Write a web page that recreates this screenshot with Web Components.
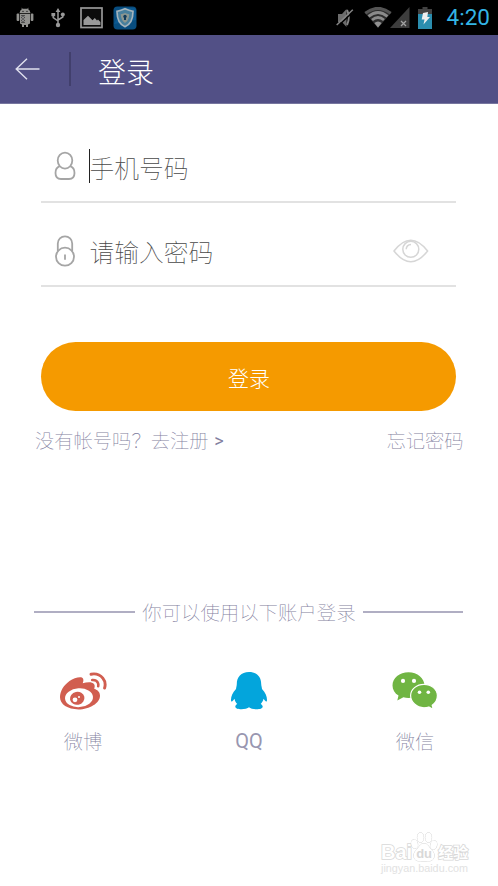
<!DOCTYPE html>
<html lang="zh-CN">
<head>
<meta charset="utf-8">
<title>登录</title>
<style>
body {
    margin: 0;
    background: #fff;
    font-family: Roboto, "Noto Sans CJK SC", sans-serif;
    font-weight: 100;
    overflow: hidden;
}
</style>
</head>
<body>
<login-page></login-page>

<script>
const icons = {
    android: [20, 22, `<g fill="#92928f"><path d="M4.5 6.2Q5 2.8 7 2L6 .5 7.8 1.7h4.4L14 .5 13 2q2 .8 2.5 4.2z"/><path d="M5 7h10v9.5l-2 1V20h-2v-2H9v2H7v-2.5l-2-1z"/><rect x="1.6" y="6.5" width="2.7" height="7.5" rx="1"/><rect x="15.7" y="6.5" width="2.7" height="7.5" rx="1"/></g><path d="M6 8h4v8H6z" fill="#333" opacity=".75"/><path d="M6 9l4 3-4 3M10 9l-4 3 4 3" stroke="#aaa" stroke-width=".7" fill="none"/><circle cx="8" cy="4.3" r=".6"/><circle cx="12" cy="4.3" r=".6"/>`],
    usb: [14, 20, `<g fill="none" stroke="#999" stroke-width="1.5"><path d="M7 3v14M2.2 6v3.6L7 13M11.8 6v3L7 12"/></g><g fill="#999"><path d="M7 0l2.4 4H4.6zM.4 5h3.8v3.2H.4z"/><circle cx="11.8" cy="6.4" r="2"/><circle cx="7" cy="17" r="2.2"/></g>`],
    picture: [24, 22, `<rect x="1" y="1" width="21" height="19.5" fill="#0b0b0b" stroke="#989898" stroke-width="1.7"/><path d="M3.5 18v-5L8 8.8l4.5 4.5 2.3-2.3 2.2 2.5 1-1 2.4 2.5v3z" fill="#999"/>`],
    shield: [24, 24, `<rect x=".5" y=".5" width="23" height="23" rx="4" fill="#084d7f"/><path d="M1 18l8-16h11q3 0 3 3v9z" fill="#1065a0" opacity=".55"/><path d="M12 2.8Q16 4.7 20 5.3 20 17.5 12 20.7 4 17.5 4 5.3 8 4.7 12 2.8z" fill="#477f9d" stroke="#a5b4bc" stroke-width="1.7"/><path d="M12 7q2 1 4.3 1.3Q16 14.5 12 17 8 14.5 7.7 8.3 10 8 12 7z" fill="#8b9690"/><circle cx="12" cy="10.4" r="1.7" fill="#123c5c"/><path d="M11 11h2v3h-2z" fill="#123c5c"/>`],
    mute: [18, 22, `<path d="M2 7h4l4.5-5v18L6 15H2z" fill="#6c6c6c"/><path d="M11 3q3.6 7.5 0 15" fill="none" stroke="#858585" stroke-width="2"/><path d="M2 19L18 4" stroke="#000" stroke-width="1.5"/><path d="M.7 18L16.8 2.8" stroke="#858585" stroke-width="1.5"/>`],
    wifi: [28, 22, `<path d="M.7 5.6Q14-4 27.3 5.6L14 21z" fill="#2d2d2d"/><path d="M1.3 6.2Q14-3.5 26.7 6.2" fill="none" stroke="#555" stroke-width="3"/><g fill="none" stroke="#8b8b8b" stroke-width="2.8"><path d="M4.5 9.4Q14 1.5 23.5 9.4M8 13Q14 8 20 13"/></g><path d="M10.3 16q3.7-3 7.4 0L14 20.5z" fill="#929292"/>`],
    signal: [20, 21, `<path d="M19.5 0v21H0z" fill="#3d3d3d"/><path d="M11 14l5 5M16 14l-5 5" stroke="#a3a3a3" stroke-width="1.3"/>`],
    battery: [14, 22, `<path d="M4.5 0h5v2H14v6H0V2h4.5z" fill="#424242"/><path d="M0 7h14v15H0z" fill="#2b8dae"/><path d="M5 6l5-1-.7 5H12L5.5 17.5l1-5H3.7z" fill="#eee"/>`],
    back: [26, 24, `<path d="M12 1.8L1.2 12 12 22.2M1.5 12h23" fill="none" stroke="#e0e0ee" stroke-width="1.4"/>`],
    user: [22, 30, `<g fill="none" stroke="#a5a5a5" stroke-width="1.8"><ellipse cx="11" cy="9.6" rx="7.3" ry="8"/><path d="M5.7 15.2Q1.5 16.8 1.5 22q0 6 5.5 6h8q5.5 0 5.5-6 0-5.2-4.2-6.8"/></g>`],
    lock: [22, 32, `<g fill="none" stroke="#a5a5a5" stroke-width="1.8"><path d="M3.8 16V8.5a7.2 7.2 0 0 1 14.4 0V16"/><circle cx="11" cy="21.7" r="9"/><path d="M11 19.5v5.2"/></g>`],
    eye: [36, 24, `<g fill="none" stroke="#d6d6d6" stroke-width="1.5"><path d="M1 12Q17.8-9.5 34.6 12 17.8 33.5 1 12z"/><circle cx="17.8" cy="10.3" r="8"/><path d="M13.2 10.3q.2-4.5 4.8-4.8"/></g>`],
    weibo: [48, 38, `<path d="M10.5 9C15 6 22.5 3.7 24 6.5c.8 1.6.2 3.4-.3 4.8C28 10 33 9.5 35 12c1.2 1.7.6 3.5.2 4.7 3.7 1.4 5.8 3.3 5.8 7 0 7.4-10.4 13.7-21.5 13.7C8.5 37.4 1 32.3 1 25.3 1 19 4.8 13.2 10.5 9z" fill="#d15e50"/><ellipse cx="20" cy="25.7" rx="14" ry="9.4" transform="rotate(-4 20 25.7)" fill="#fff"/><ellipse cx="18.2" cy="26.3" rx="7.3" ry="6.5" transform="rotate(-12 18.2 26.3)" fill="#d15e50"/><circle cx="16" cy="27.8" r="2.4" fill="#fff"/><circle cx="20" cy="25.1" r="1" fill="#fff"/><g fill="none" stroke="#d15e50" stroke-linecap="round"><path d="M32 2.2Q39.5.8 43.8 6.2 47.3 10.5 45.6 16" stroke-width="2.9"/><path d="M33.2 8q4.6-.3 5.8 3 .6 1.5.2 3.3" stroke-width="2.6"/></g>`],
    qq: [38, 38, `<path d="M19 0C11 0 6.8 5.4 6.8 12c0 2-.6 3-.8 5C2.5 20.8 1 24 1 28c0 2 1 1.8 2.1.5l1.4-1.7c.3 2.1 1.4 3.9 2.8 5.2-1.3.6-2 1.6-2 2.7 0 3.3 11 3.2 13.7.5 2.8 2.7 13.7 2.8 13.7-.5 0-1.1-.8-2.1-2-2.7 1.4-1.4 2.5-3.1 2.8-5.2l1.4 1.7C36 29.8 37 30 37 28c0-4-1.5-7.2-5-11-.1-2-.8-3-.8-5C31.2 5.4 27 0 19 0z" fill="#03a5dc"/>`],
    wechat: [46, 38, `<path d="M16.5.2C7.6.2.5 6.1.5 13.4c0 4.2 2.3 7.8 6 10.1l-1.2 5 6.1-3.2c1.6.5 3.3.7 5.1.7 8.9 0 16-5.7 16-12.6S25.4.2 16.5.2z" fill="#70b543"/><path d="M32 12.3c-7.4 0-13.4 5-13.4 11.3S24.6 35.8 32 35.8c1.8 0 3.4-.3 4.8-.8l4.5 2.5-1.1-4.3c3.2-2 5.2-5.4 5.2-9.6 0-6.3-6-11.3-13.4-11.3z" fill="#70b543" stroke="#fff" stroke-width="1.2"/><g fill="#fff"><circle cx="11" cy="8.9" r="2.1"/><circle cx="22" cy="8.9" r="2.1"/><circle cx="27.5" cy="20.3" r="1.8"/><circle cx="36.3" cy="20.3" r="1.8"/></g>`],
    paw: [28, 30, `<g fill="#fff" stroke="#d6d6d6"><ellipse cx="4.5" cy="12" rx="3.2" ry="4.4" transform="rotate(-15 4.5 12)"/><ellipse cx="10.5" cy="5.5" rx="3.1" ry="4.8"/><ellipse cx="18.5" cy="5.5" rx="3.1" ry="4.8"/><ellipse cx="23.7" cy="13" rx="3.2" ry="4.4" transform="rotate(15 23.7 13)"/><path d="M14 11.5c-4 0-5 4-8 7-3.4 3.2-3 9.6 2 10.4 3 .5 9 .5 12 0 5-.8 5.4-7.2 2-10.4-3-3-4-7-8-7z"/></g>`]
};

class AppIcon extends HTMLElement {
    constructor() {
        super();
        this.shadowDOM = this.attachShadow({mode: "open"});
    }

    connectedCallback() {
        const [width, height, shapes] = icons[this.getAttribute("name")];
        this.shadowDOM.innerHTML = `
        <style>
        :host {
            display: block;
            flex: none;
        }
        svg {
            display: block;
        }
        </style>
        <svg width="${width}" height="${height}" viewBox="0 0 ${width} ${height}">${shapes}</svg>
        `;
    }
}

class StatusBar extends HTMLElement {
    constructor() {
        super();
        this.attachShadow({mode: "open"}).innerHTML = `
        <style>
        :host {
            display: flex;
            justify-content: space-between;
            box-sizing: border-box;
            height: 35px;
            padding: 0 8px 0 15px;
            background: #000;
        }
        div {
            display: flex;
            align-items: center;
        }
        .left app-icon:nth-child(2) { margin-left: 16px; }
        .left app-icon:nth-child(3) { margin-left: 15px; }
        .left app-icon:nth-child(4) { margin-left: 9px; }
        .right app-icon:nth-child(2) { margin-left: 10px; }
        .right app-icon:nth-child(3) { margin-left: -2px; }
        .right app-icon:nth-child(4) { margin: 0 15px 0 8px; }
        span {
            font-size: 22.5px;
            font-weight: 400;
            line-height: 37px;
            color: #33b5e5;
        }
        </style>
        <div class="left">
            <app-icon name="android"></app-icon>
            <app-icon name="usb"></app-icon>
            <app-icon name="picture"></app-icon>
            <app-icon name="shield"></app-icon>
        </div>
        <div class="right">
            <app-icon name="mute"></app-icon>
            <app-icon name="wifi"></app-icon>
            <app-icon name="signal"></app-icon>
            <app-icon name="battery"></app-icon>
            <span>4:20</span>
        </div>
        `;
    }
}

class TitleBar extends HTMLElement {
    constructor() {
        super();
        this.attachShadow({mode: "open"}).innerHTML = `
        <style>
        :host {
            display: flex;
            align-items: center;
            box-sizing: border-box;
            height: 69px;
            padding-left: 15px;
            border-bottom: 1px solid #77769f;
            background: #525086;
            color: #fff;
        }
        i {
            width: 2px;
            height: 34px;
            margin: 0 27px 0 28px;
            background: #413f6c;
        }
        h1 {
            margin: 10px 0 0;
            font-size: 28px;
            font-weight: 300;
            line-height: 40px;
        }
        </style>
        <app-icon name="back"></app-icon>
        <i></i>
        <h1><slot></slot></h1>
        `;
    }
}

class InputRow extends HTMLElement {
    constructor() {
        super();
        this.attachShadow({mode: "open"}).innerHTML = `
        <style>
        :host {
            display: flex;
            align-items: center;
            box-sizing: border-box;
            height: 84.5px;
            padding: 21px 27px 0 13px;
            border-bottom: 2px solid #e2e2e2;
            color: #484848;
            font-size: 24.8px;
            line-height: 34px;
        }
        .caret {
            width: 1px;
            height: 34px;
            margin: 0 -1px 7px 13px;
            background: transparent;
        }
        :host([focused]) .caret {
            background: #222;
        }
        .icon {
            margin-bottom: 7px;
        }
        .text {
            flex: 1;
        }
        ::slotted(app-icon) {
            margin-bottom: 6px;
        }
        </style>
        <app-icon class="icon" name="${this.getAttribute("icon")}"></app-icon>
        <span class="caret"></span>
        <span class="text"><slot></slot></span>
        <slot name="action"></slot>
        `;
    }
}

class RoundButton extends HTMLElement {
    constructor() {
        super();
        this.attachShadow({mode: "open"}).innerHTML = `
        <style>
        :host {
            display: block;
        }
        button {
            display: block;
            width: 100%;
            height: 69px;
            padding: 1px 0 0;
            border: 0;
            border-radius: 35px;
            background: #f59a00;
            color: #fff;
            font: inherit;
            font-size: 21px;
            font-weight: 300;
        }
        </style>
        <button><slot></slot></button>
        `;
    }
}

class SocialLogin extends HTMLElement {
    constructor() {
        super();
        this.attachShadow({mode: "open"}).innerHTML = `
        <style>
        :host {
            display: flex;
            flex-direction: column;
            align-items: center;
            gap: 18px;
            color: #8280a0;
            font-size: 19.3px;
            line-height: 30px;
        }
        </style>
        <app-icon name="${this.getAttribute("icon")}"></app-icon>
        <span><slot></slot></span>
        `;
    }
}

class SiteMark extends HTMLElement {
    constructor() {
        super();
        this.attachShadow({mode: "open"}).innerHTML = `
        <style>
        :host {
            position: absolute;
            left: 381px;
            top: 832px;
            display: block;
            width: 90px;
            color: #fff;
            font-family: "Liberation Sans", "Noto Sans CJK SC", sans-serif;
            font-weight: 700;
            -webkit-text-stroke: 1.6px #d8d8d8;
            paint-order: stroke fill;
            white-space: nowrap;
        }
        .logo {
            display: flex;
            align-items: flex-end;
            height: 30px;
            font-size: 20px;
            line-height: 19px;
        }
        .paw {
            display: grid;
            margin: 0 0 0 -2px;
        }
        .paw > * {
            grid-area: 1 / 1;
        }
        .paw span {
            align-self: end;
            justify-self: center;
            font-size: 13px;
            line-height: 17px;
            color: #d8d8d8;
            -webkit-text-stroke: 0;
        }
        .cn {
            font-size: 15px;
        }
        .url {
            font-size: 10.8px;
            font-weight: 400;
            line-height: 13px;
            color: #e2e2e2;
            -webkit-text-stroke: 0;
        }
        </style>
        <div class="logo">
            <span>Bai</span>
            <div class="paw"><app-icon name="paw"></app-icon><span>du</span></div>
            <span class="cn">经验</span>
        </div>
        <div class="url">jingyan.baidu.com</div>
        `;
    }
}

class LoginPage extends HTMLElement {
    constructor() {
        super();
        this.attachShadow({mode: "open"}).innerHTML = `
        <style>
        :host {
            display: block;
            position: relative;
            height: 886px;
            overflow: hidden;
        }
        .form {
            padding: 14px 41.6px 0 41.4px;
        }
        round-button {
            margin-top: 55px;
        }
        .links, .divider {
            display: flex;
            justify-content: space-between;
            align-items: center;
            margin: 16px 34.5px 0 35px;
            color: #8280a0;
            font-size: 19.3px;
            line-height: 30px;
        }
        .links b {
            position: relative;
            top: -1px;
            margin-left: 1px;
            font-size: 18px;
            font-weight: 400;
        }
        .divider {
            margin: 142px 34.6px 0 34.4px;
            font-size: 19.4px;
            gap: 7px;
        }
        .divider i {
            flex: 1;
            height: 2px;
            margin-bottom: 5px;
            background: #b0aec3;
        }
        .social {
            display: grid;
            grid-template-columns: repeat(3, 1fr);
            margin-top: 43px;
        }
        .latin {
            position: relative;
            top: -2px;
            font-weight: 400;
            font-size: 20px;
            color: #9896b0;
        }
        </style>
        <status-bar></status-bar>
        <title-bar>登录</title-bar>
        <div class="form">
            <input-row icon="user" focused>手机号码</input-row>
            <input-row icon="lock">请输入密码<app-icon slot="action" name="eye"></app-icon></input-row>
            <round-button>登录</round-button>
        </div>
        <div class="links">
            <span>没有帐号吗？去注册 <b>&gt;</b></span>
            <span>忘记密码</span>
        </div>
        <div class="divider"><i></i><span>你可以使用以下账户登录</span><i></i></div>
        <div class="social">
            <social-login icon="weibo">微博</social-login>
            <social-login icon="qq"><span class="latin">QQ</span></social-login>
            <social-login icon="wechat">微信</social-login>
        </div>
        <site-mark></site-mark>
        `;
    }
}

customElements.define("app-icon", AppIcon);
customElements.define("status-bar", StatusBar);
customElements.define("title-bar", TitleBar);
customElements.define("input-row", InputRow);
customElements.define("round-button", RoundButton);
customElements.define("social-login", SocialLogin);
customElements.define("site-mark", SiteMark);
customElements.define("login-page", LoginPage);
</script>
</body>
</html>
